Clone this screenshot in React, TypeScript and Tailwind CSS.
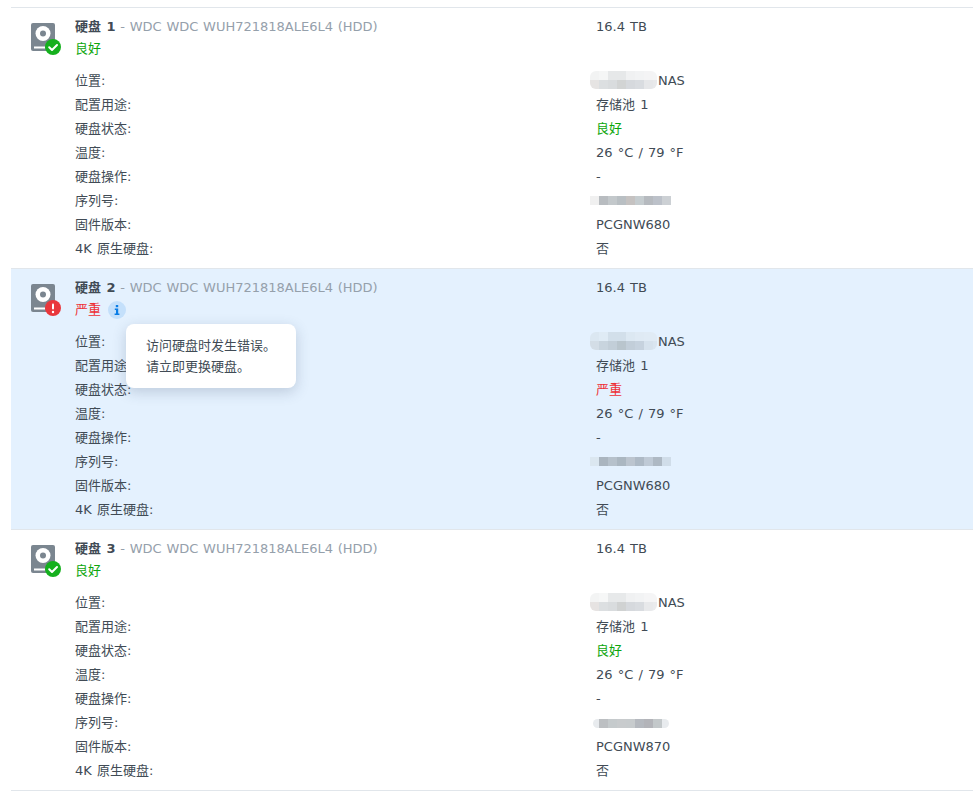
import React from 'react';

const font = { latin: 'font-["DejaVu_Sans","Noto_Sans_CJK_SC",sans-serif]' };

const nameMosaics: string[][][] = [
  [
    ['#f2f3f3', '#f5f6f6', '#e6e8e9', '#e6e8e9', '#f0f1f2', '#f2f3f4', '#f4f4f5', '#f4f5f6'],
    ['#e6e4e3', '#dcdfe1', '#d9dcde', '#d2d4d4', '#d6d9dd', '#d9dce0', '#e6e7e9', '#e8e9eb'],
  ],
  [
    ['#dbe7f1', '#dfebf5', '#d2dfea', '#d2dfea', '#dce8f2', '#dfeaf4', '#e0ebf5', '#e0ebf5'],
    ['#d3dde6', '#c8d4de', '#c2ced8', '#b9c5cd', '#c2ced9', '#c6d2de', '#d6e2ed', '#d9e5f0'],
  ],
  [
    ['#f3f4f4', '#f6f7f7', '#e7e9ea', '#e7e9ea', '#f0f1f2', '#f2f3f4', '#f5f5f6', '#f5f5f6'],
    ['#e6e3e2', '#dcdfe1', '#d9dcde', '#d0d2d2', '#d6d9dd', '#d9dce0', '#e8e9eb', '#eaebed'],
  ],
];

const serialMosaics: string[][] = [
  ['#f0f0f0', '#b8bcc0', '#c3c8cb', '#b9bfc3', '#c5c2c1', '#c5cccf', '#b6babf', '#bcc1c9', '#ccd0d4'],
  ['#dbe7f0', '#aab5bf', '#b6c1cb', '#abb7c1', '#bcc5cf', '#aebac6', '#bfcad6', '#aeb9c4', '#d0dde9'],
  ['#e8ebee', '#bcbfc2', '#c5cacc', '#c8cbcd', '#c7cbcd', '#b5b9bf', '#b3b4b9', '#c3c8ca', '#e8ebee'],
];

const Mosaic: React.FC<{ rows: string[][]; first?: number; last?: number; rounded?: boolean }> = ({
  rows,
  first = 9,
  last = 9,
  rounded,
}) => (
  <div className={`flex flex-col overflow-hidden ${rounded ? 'rounded-[6px]' : ''}`}>
    {rows.map((row, i) => (
      <div key={i} className="flex">
        {row.map((c, j) => (
          <div
            key={j}
            style={{
              backgroundColor: c,
              width: j === 0 ? first : j === row.length - 1 ? last : 9,
              height: 9,
            }}
          />
        ))}
      </div>
    ))}
  </div>
);

const DiskIcon: React.FC<{ ok: boolean }> = ({ ok }) => (
  <svg width="32" height="36" viewBox="0 0 32 36" className="block">
    <rect x="0" y="2" width="24" height="28" rx="2" fill="#7b8690" />
    <circle cx="12" cy="12.5" r="7.5" fill="#fff" />
    <circle cx="12" cy="12.5" r="3" fill="#7b8690" />
    <rect x="3" y="25.5" width="11" height="2" fill="#fff" />
    <circle cx="22" cy="26" r="8" fill={ok ? '#15b01e' : '#e9373c'} />
    {ok ? (
      <path d="M18.2 26.2l2.8 2.8 5-5" fill="none" stroke="#fff" strokeWidth="2" strokeLinecap="round" strokeLinejoin="round" />
    ) : (
      <>
        <rect x="21" y="21.5" width="2" height="6" rx="1" fill="#fff" />
        <circle cx="22" cy="30" r="1.2" fill="#fff" />
      </>
    )}
  </svg>
);

const labels = ['位置:', '配置用途:', '硬盘状态:', '温度:', '硬盘操作:', '序列号:', '固件版本:', '4K 原生硬盘:'];

interface Disk {
  no: number;
  ok: boolean;
  firmware: string;
}

const disks: Disk[] = [
  { no: 1, ok: true, firmware: 'PCGNW680' },
  { no: 2, ok: false, firmware: 'PCGNW680' },
  { no: 3, ok: true, firmware: 'PCGNW870' },
];

const DiskRow: React.FC<{ disk: Disk; index: number }> = ({ disk, index }) => {
  const statusText = disk.ok ? '良好' : '严重';
  const statusColor = disk.ok ? 'text-[#0da60d]' : 'text-[#ee2f36]';

  const values: React.ReactNode[] = [
    <div className="ml-[-6px] flex items-center">
      <div className="mb-[2px]">
        <Mosaic rows={nameMosaics[index]} last={4} rounded />
      </div>
      <span className="ml-px">NAS</span>
    </div>,
    '存储池 1',
    <span className={statusColor}>{statusText}</span>,
    '26 °C / 79 °F',
    '-',
    index === 2 ? (
      <div className="ml-[-3px]">
        <Mosaic rows={[serialMosaics[index]]} first={6} last={7} rounded />
      </div>
    ) : (
      <div className="mb-px ml-[-6px]">
        <Mosaic rows={[serialMosaics[index]]} />
      </div>
    ),
    disk.firmware,
    '否',
  ];

  return (
    <div className={`relative flex h-[261px] border-b border-[#e1e6eb] pl-[20px] pt-[8px] ${disk.ok ? 'bg-white' : 'bg-[#e4f1fe]'}`}>
      <div className="w-[44px] shrink-0 pt-[5px]">
        <DiskIcon ok={disk.ok} />
      </div>
      <div className="flex-1">
        <div className="flex h-[21px] items-center">
          <div className="w-[521px] shrink-0 whitespace-nowrap">
            <span className="font-bold">硬盘 {disk.no}</span>
            <span className="text-[#95a0ab] [word-spacing:0.6px]"> - WDC WDC WUH721818ALE6L4 (HDD)</span>
          </div>
          <div>16.4 TB</div>
        </div>
        <div className="mt-[2px] flex h-[20px] items-center">
          <span className={statusColor}>{statusText}</span>
          {!disk.ok && (
            <span className="ml-[7px] flex h-[18px] w-[18px] items-center justify-center rounded-full bg-[#c4e0fb]">
              <svg width="6" height="10" viewBox="0 0 6 10">
                <rect x="1.8" y="0" width="2.4" height="2.2" fill="#0a7de6" />
                <path d="M.8 3.4h3.4v5h1.2V10H.6V8.4h1.4V5H.8z" fill="#0a7de6" />
              </svg>
            </span>
          )}
        </div>
        <div className="mt-[10px]">
          {labels.map((label, i) => (
            <div key={label} className="flex h-[24px] items-center">
              <div className="w-[521px] shrink-0 pb-px">{label}</div>
              <div>{values[i]}</div>
            </div>
          ))}
        </div>
      </div>
      {!disk.ok && (
        <div className="absolute left-[115px] top-[55px] z-10 flex h-[64px] w-[170px] flex-col justify-center rounded-[8px] bg-white pl-[20px] leading-[21px] shadow-[0_4px_14px_rgba(50,70,100,0.22)]">
          <div>访问硬盘时发生错误。</div>
          <div>请立即更换硬盘。</div>
        </div>
      )}
    </div>
  );
};

export default function App() {
  return (
    <div className={`h-[796px] w-[973px] overflow-hidden bg-white pl-[11px] pt-[7px] text-[13px] text-[#414b55] [word-spacing:1px] ${font.latin}`}>
      <div className="border-t border-[#e1e6eb]">
        {disks.map((d, i) => (
          <DiskRow key={d.no} disk={d} index={i} />
        ))}
      </div>
    </div>
  );
}
